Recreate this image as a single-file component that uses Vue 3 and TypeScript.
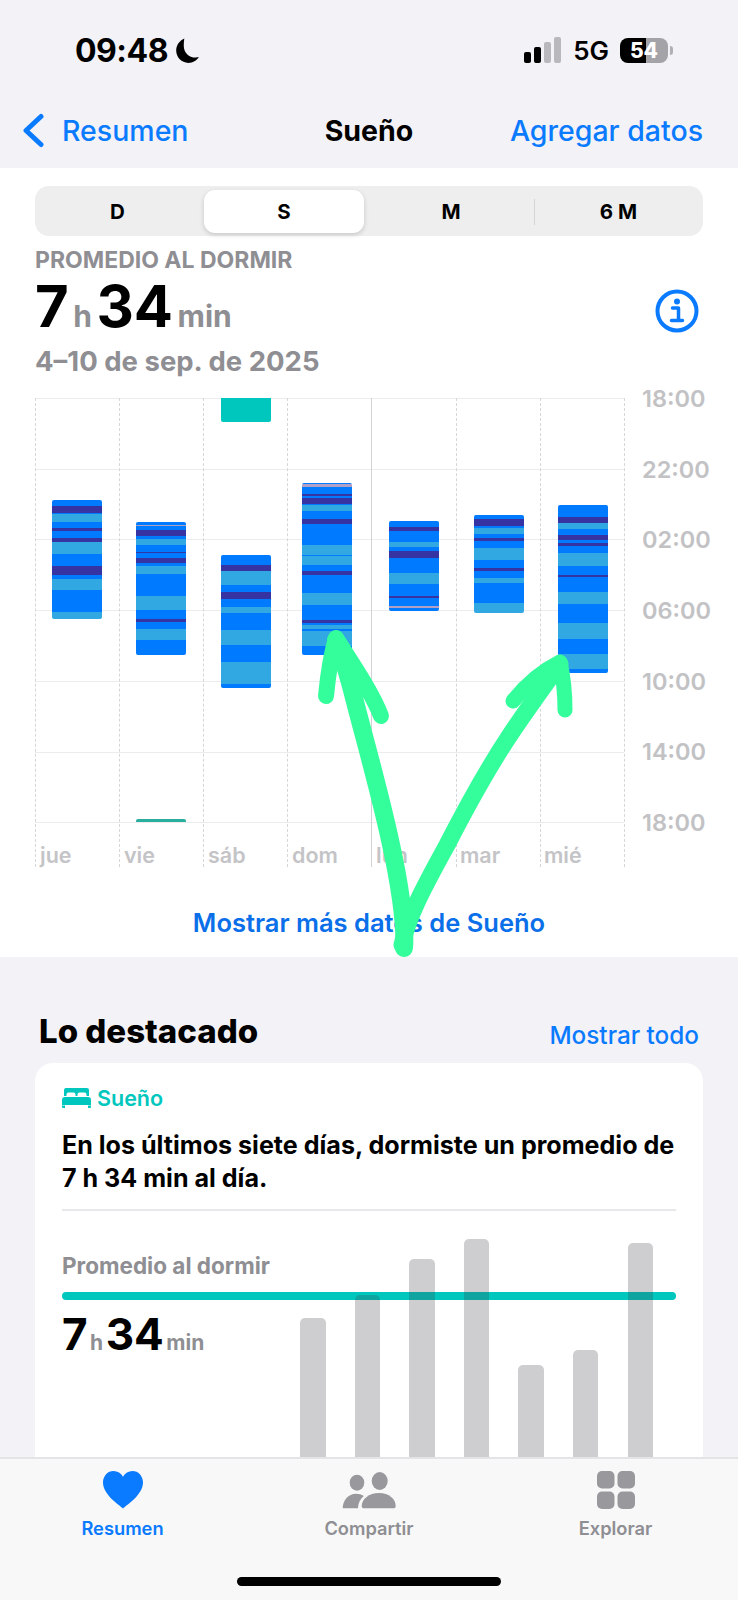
<script setup lang="ts">
type Stage = 'c' | 'r' | 'd' | 'a'
// [zoomed end position, stage]; divided by 3 when drawn
type Bar = { x: number; top: number; stops: [number, Stage][] }

const origin = 25
const bars: Bar[] = [
  { x: 17, top: 331, stops: [[348, 'c'], [370, 'd'], [374, 'c'], [396, 'r'], [415, 'c'], [423, 'd'], [445, 'c'], [456, 'd'], [492, 'r'], [530, 'c'], [557, 'd'], [567, 'c'], [600, 'r'], [668, 'c'], [688, 'r']] },
  { x: 101, top: 396, stops: [[405, 'c'], [410, 'a'], [422, 'c'], [440, 'd'], [447, 'c'], [467, 'r'], [488, 'c'], [491, 'd'], [506, 'c'], [521, 'd'], [529, 'c'], [554, 'r'], [618, 'c'], [662, 'r'], [689, 'c'], [697, 'd'], [719, 'c'], [752, 'r'], [783, 'c'], [785, 'r'], [795, 'c']] },
  { x: 186, top: 495, stops: [[525, 'c'], [545, 'd'], [585, 'r'], [606, 'c'], [628, 'd'], [651, 'c'], [670, 'r'], [720, 'c'], [765, 'r'], [817, 'c'], [884, 'r'], [895, 'c']] },
  { x: 267, top: 280, stops: [[284, 'c'], [291, 'a'], [314, 'c'], [318, 'd'], [325, 'c'], [342, 'd'], [345, 'c'], [365, 'r'], [387, 'c'], [402, 'd'], [465, 'c'], [495, 'r'], [500, 'c'], [525, 'r'], [545, 'c'], [557, 'd'], [609, 'c'], [647, 'r'], [691, 'c'], [699, 'd'], [707, 'c'], [719, 'r'], [724, 'c'], [770, 'r'], [795, 'c']] },
  { x: 354, top: 393, stops: [[413, 'c'], [425, 'd'], [456, 'c'], [471, 'r'], [485, 'c'], [504, 'd'], [549, 'c'], [583, 'r'], [620, 'c'], [626, 'd'], [648, 'c'], [654, 'a'], [664, 'c']] },
  { x: 439, top: 375, stops: [[389, 'c'], [408, 'd'], [416, 'c'], [434, 'r'], [446, 'c'], [454, 'd'], [476, 'c'], [510, 'r'], [534, 'c'], [545, 'd'], [565, 'c'], [579, 'r'], [641, 'c'], [670, 'r']] },
  { x: 523, top: 347, stops: [[383, 'c'], [400, 'd'], [417, 'r'], [435, 'c'], [450, 'd'], [460, 'c'], [469, 'd'], [490, 'c'], [529, 'r'], [556, 'c'], [561, 'd'], [607, 'c'], [642, 'r'], [700, 'c'], [747, 'r'], [794, 'c'], [837, 'r'], [850, 'c']] }
]

const stageClass: Record<Stage, string> = { c: 'core', r: 'rem', d: 'deep', a: 'awake' }

function segments(bar: Bar): { h: number; cls: string }[] {
  let prev = bar.top
  return bar.stops.map(([end, s]) => {
    const h = (end - prev) / 3
    prev = end
    return { h, cls: stageClass[s] }
  })
}

function barStyle(bar: Bar) {
  return { left: bar.x + 'px', top: (bar.top - origin) / 3 + 'px' }
}

const dayLines = [0, 83.5, 168, 252, 336, 420.5, 505, 589]
const hourLines = [0, 71, 141, 212, 283, 354, 424]
const hours = ['18:00', '22:00', '02:00', '06:00', '10:00', '14:00', '18:00']
const days = ['jue', 'vie', 'sáb', 'dom', 'lun', 'mar', 'mié']
const weekBars = [1318, 1295, 1259, 1239, 1365, 1350, 1243]
</script>

<template>
  <div class="screen">
    <header class="top">
      <div class="status">
        <div class="clock">
          <span>09:48</span>
          <svg width="26" height="27" viewBox="0 0 24 25"><path d="M9.500 1.500C5 3.500 2 7.800 2 12.600 2 19 7 24 13.300 24c4 0 7.600-2 9.700-5.400-1 .3-2 .4-3 .4C13.700 19 9 14.200 9 8c0-2.300.2-4.500.5-6.500z" fill="#000" /></svg>
        </div>
        <div class="indicators">
          <svg width="38" height="26" viewBox="0 0 38 26">
            <rect x="0" y="15" width="7" height="11" rx="2" fill="#000" />
            <rect x="10" y="10" width="7" height="16" rx="2" fill="#000" />
            <rect x="20" y="5" width="7" height="21" rx="2" fill="#b9b9bd" />
            <rect x="30" y="0" width="7" height="26" rx="2" fill="#b9b9bd" />
          </svg>
          <span class="net">5G</span>
          <div class="battery">
            <span class="level">54</span>
            <i class="cap"></i>
          </div>
        </div>
      </div>
      <nav class="navbar">
        <a class="back">
          <svg width="23" height="35" viewBox="0 0 23 35"><path d="M19 3.500 4 17.500l15 14" fill="none" stroke="#0a7aff" stroke-width="5" stroke-linecap="round" stroke-linejoin="round" /></svg>
          <span>Resumen</span>
        </a>
        <b class="title">Sueño</b>
        <a class="add">Agregar datos</a>
      </nav>
    </header>

    <section class="summary">
      <div class="segmented">
        <span class="seg">D</span>
        <span class="seg active">S</span>
        <span class="seg">M</span>
        <span class="seg last">6 M</span>
      </div>
      <div class="caption">PROMEDIO AL DORMIR</div>
      <div class="value-row">
        <div class="value">7<small>h</small>34<small>min</small></div>
        <svg class="info" width="44" height="44" viewBox="0 0 44 44">
          <circle cx="22" cy="22" r="19.500" fill="none" stroke="#0a7aff" stroke-width="4" />
          <circle cx="22" cy="12.500" r="3" fill="#0a7aff" />
          <path d="M17.500 19h6v12M16.500 31.500h11" fill="none" stroke="#0a7aff" stroke-width="3.500" stroke-linecap="round" stroke-linejoin="round" />
        </svg>
      </div>
      <div class="range">4–10 de sep. de 2025</div>

      <div class="chart">
        <div class="plot">
          <i v-for="y in hourLines" :key="y" class="h-line" :style="{ top: y + 'px' }"></i>
          <i v-for="(x, i) in dayLines" :key="x" class="v-line" :class="{ monday: i === 4 }" :style="{ left: x + 'px' }"></i>
          <div class="nap" style="left: 186px; top: 0; height: 24px"></div>
          <div class="nap thin" style="left: 101px; top: 421px; height: 3px"></div>
          <div v-for="(bar, b) in bars" :key="b" class="bar" :style="barStyle(bar)">
            <i v-for="(s, j) in segments(bar)" :key="j" :class="s.cls" :style="{ height: s.h + 'px' }"></i>
          </div>
          <div class="days">
            <span v-for="d in days" :key="d">{{ d }}</span>
          </div>
        </div>
        <div class="hours">
          <span v-for="(h, i) in hours" :key="i">{{ h }}</span>
        </div>
      </div>

      <a class="more">Mostrar más datos de Sueño</a>
    </section>

    <section class="highlights">
      <div class="hl-head">
        <h2>Lo destacado</h2>
        <a>Mostrar todo</a>
      </div>
      <article class="card">
        <div class="card-tag">
          <svg width="29" height="20" viewBox="0 0 29 20">
            <path d="M4 0h21a2 2 0 0 1 2 2v6h-2.500V6.500a2 2 0 0 0-2-2h-5a2 2 0 0 0-2 2V8h-2V6.500a2 2 0 0 0-2-2h-5a2 2 0 0 0-2 2V8H2V2a2 2 0 0 1 2-2z" fill="#00c7be" />
            <path d="M3 9h23a3 3 0 0 1 3 3v5H0v-5a3 3 0 0 1 3-3zM0 17.500h3V20H1a1 1 0 0 1-1-1zM26 17.500h3V19a1 1 0 0 1-1 1h-2z" fill="#00c7be" />
          </svg>
          <span>Sueño</span>
        </div>
        <p class="card-text">En los últimos siete días, dormiste un promedio de<br />7 h 34 min al día.</p>
        <div class="card-chart">
          <div class="card-label">Promedio al dormir</div>
          <i class="avg-line"></i>
          <div class="card-value">7<small>h</small>34<small>min</small></div>
          <div class="week">
            <i v-for="(t, i) in weekBars" :key="i" :style="{ height: 1457 - t + 'px' }"></i>
          </div>
        </div>
      </article>
    </section>

    <footer class="tabbar">
      <div class="tabs">
        <a class="tab on">
          <svg width="40" height="38" viewBox="0 0 40 38"><path d="M20 37.500C16.500 34 0 24 0 11.500 0 4.800 4.800 0 10.500 0 14.500 0 18 2.200 20 5.800 22 2.200 25.500 0 29.500 0 35.200 0 40 4.800 40 11.500 40 24 23.500 34 20 37.500z" fill="#0a7aff" /></svg>
          <span>Resumen</span>
        </a>
        <a class="tab">
          <svg width="54" height="37" viewBox="0 0 54 37" fill="#98989d">
            <ellipse cx="15" cy="10.700" rx="7.300" ry="8" />
            <ellipse cx="37.700" cy="9" rx="8" ry="9" />
            <path d="M.7 36.300c0-8 5.700-14.600 13.300-14.600 3 0 5.500.8 7.800 2.300-3.500 3-5.800 7.200-5.800 12.300z" />
            <path d="M22 36.300c-1.500 0-2.300-.8-2.300-2.300 0-7 7.300-13 17.300-13s16.700 6 16.700 13c0 1.500-.8 2.300-2.300 2.300z" />
          </svg>
          <span>Compartir</span>
        </a>
        <a class="tab">
          <svg width="38" height="38" viewBox="0 0 38 38" fill="#98989d">
            <rect x="0" y="0" width="17.500" height="17.500" rx="5" />
            <rect x="20.500" y="0" width="17.500" height="17.500" rx="5" />
            <rect x="0" y="20.500" width="17.500" height="17.500" rx="5" />
            <rect x="20.500" y="20.500" width="17.500" height="17.500" rx="5" />
          </svg>
          <span>Explorar</span>
        </a>
      </div>
      <i class="home"></i>
    </footer>

    <!-- hand drawn markup on top of the screenshot -->
    <svg class="scribble" width="738" height="1600" viewBox="0 0 738 1600" fill="none" stroke="#34fd9b" stroke-linecap="round" stroke-linejoin="round">
      <path stroke-width="18" d="M404 948C406 925 399 880 390 840 378 785 362 730 352 690 346 668 341 650 336 640" />
      <path stroke-width="16" d="M326 696C328 675 331 655 336 638 350 660 372 692 381 716" />
      <path stroke-width="17" d="M402 945C408 915 428 880 447 845 465 810 490 765 510 735 528 708 545 685 560 664" />
      <path stroke-width="15" d="M513 701C525 686 540 672 560 662 564 680 565 695 565 710" />
    </svg>
  </div>
</template>

<style>
html,
body {
  margin: 0;
  background: #f2f2f7;
}
</style>

<style scoped>
.screen {
  position: relative;
  width: 738px;
  height: 1600px;
  overflow: hidden;
  background: #f2f2f7;
  font-family: Inter, "Liberation Sans", sans-serif;
  color: #000;
}
i {
  display: block;
}
.top {
  height: 168px;
  display: flex;
  flex-direction: column;
}
.status {
  height: 100px;
  display: flex;
  justify-content: space-between;
  align-items: center;
  padding: 0 70px 0 75px;
}
.clock {
  display: flex;
  align-items: center;
  gap: 6px;
  font-size: 32px;
  font-weight: 700;
  letter-spacing: -0.5px;
}
.indicators {
  display: flex;
  align-items: center;
  gap: 11px;
}
.net {
  font-size: 26px;
  font-weight: 600;
}
.battery {
  position: relative;
  width: 48px;
  height: 25px;
  border-radius: 8px;
  background: linear-gradient(90deg, #000 54%, #a3a3a8 54%);
  display: flex;
  justify-content: center;
  align-items: center;
}
.level {
  font-size: 21px;
  font-weight: 800;
  color: #fff;
}
.cap {
  position: absolute;
  right: -5px;
  top: 8px;
  width: 3px;
  height: 9px;
  border-radius: 0 3px 3px 0;
  background: #b0b0b4;
}
.navbar {
  flex: 1;
  display: grid;
  grid-template-columns: 1fr auto 1fr;
  align-items: center;
  padding: 0 35px 8px;
  font-size: 28.500px;
  font-weight: 500;
  color: #0a7aff;
}
.back {
  display: flex;
  align-items: center;
  gap: 17px;
  margin-left: -13px;
}
.add {
  justify-self: end;
  white-space: nowrap;
}
.title {
  color: #000;
  font-weight: 700;
}
.summary {
  height: 789px;
  background: #fff;
  padding: 18px 35px 0;
  box-sizing: border-box;
}
.segmented {
  height: 50px;
  border-radius: 14px;
  background: #eeeeef;
  display: grid;
  grid-template-columns: 165px 168px 166px 169px;
  align-items: center;
  font-size: 20.500px;
  font-weight: 700;
}
.seg {
  height: 43px;
  display: flex;
  align-items: center;
  justify-content: center;
}
.seg.active {
  background: #fff;
  border-radius: 11px;
  width: 160px;
  justify-self: center;
  box-shadow: 0 2px 5px rgba(0, 0, 0, 0.16);
}
.seg.last {
  position: relative;
}
.seg.last::before {
  content: "";
  position: absolute;
  left: 0;
  top: 9px;
  width: 1px;
  height: 26px;
  background: #d5d5d8;
}
.caption {
  margin-top: 12px;
  font-size: 23px;
  line-height: 24px;
  font-weight: 700;
  color: #8e8e93;
}
.value-row {
  margin-top: 8px;
  height: 62px;
  display: flex;
  justify-content: space-between;
  align-items: center;
  padding-right: 4px;
}
.value {
  font-size: 58px;
  font-weight: 700;
  line-height: 62px;
}
.value small {
  font-size: 30px;
  font-weight: 700;
  color: #8e8e93;
  margin: 0 4.500px;
}
.value small:last-child {
  margin-right: 0;
}
.range {
  margin-top: 4px;
  font-size: 27.500px;
  line-height: 30px;
  font-weight: 700;
  color: #8e8e93;
}
.chart {
  margin-top: 22px;
  display: flex;
}
.plot {
  position: relative;
  flex: none;
  width: 589px;
  height: 469px;
}
.h-line {
  position: absolute;
  left: 0;
  right: 0;
  height: 1px;
  background: #ececee;
}
.v-line {
  position: absolute;
  top: 0;
  bottom: 0;
  width: 0;
  border-left: 1px dashed #d6d6d9;
}
.v-line.monday {
  border-left: 1px solid #d3d3d6;
}
.nap {
  position: absolute;
  width: 50px;
  background: #00c7be;
  border-radius: 0 0 2px 2px;
}
.nap.thin {
  background: #2aae9e;
  border-radius: 2px 2px 0 0;
}
.bar {
  position: absolute;
  width: 50px;
  border-radius: 2px;
  overflow: hidden;
}
.core {
  background: #007aff;
}
.rem {
  background: #32a8e2;
}
.deep {
  background: #3634a3;
}
.awake {
  background: #b0a0c8;
}
.days {
  position: absolute;
  left: 0;
  right: 0;
  top: 445px;
  display: grid;
  grid-template-columns: repeat(7, 84px);
  font-size: 21.500px;
  line-height: 24px;
  font-weight: 600;
  color: #c4c4c7;
}
.days span {
  padding-left: 5px;
}
.hours {
  flex: none;
  width: 64px;
  height: 424px;
  margin-left: 18px;
  padding-top: 1px;
  display: flex;
  flex-direction: column;
  justify-content: space-between;
  font-size: 23.500px;
  line-height: 0;
  font-weight: 600;
  color: #c2c2c5;
}
.hours span {
  display: block;
}
.more {
  display: block;
  margin-top: 41px;
  text-align: center;
  font-size: 25.500px;
  line-height: 30px;
  font-weight: 600;
  color: #0a6fe8;
}
.highlights {
  padding: 0 35px;
}
.hl-head {
  height: 106px;
  display: flex;
  justify-content: space-between;
  align-items: flex-end;
  padding: 0 4px 13px 4px;
  box-sizing: border-box;
}
.hl-head h2 {
  margin: 0;
  font-size: 33px;
  line-height: 38px;
  font-weight: 800;
}
.hl-head a {
  font-size: 24.300px;
  line-height: 30px;
  font-weight: 500;
  color: #0a7aff;
}
.card {
  background: #fff;
  border-radius: 18px;
  height: 420px;
  padding: 22px 27px 0;
  box-sizing: border-box;
}
.card-tag {
  display: flex;
  align-items: center;
  gap: 6px;
  font-size: 21.500px;
  font-weight: 600;
  color: #00c7be;
}
.card-text {
  margin: 18px 0 0;
  padding-bottom: 14px;
  border-bottom: 2px solid #e8e8ea;
  font-size: 25.100px;
  line-height: 33px;
  font-weight: 700;
  white-space: nowrap;
}
.card-chart {
  position: relative;
  height: 247px;
}
.card-label {
  padding-top: 42px;
  font-size: 22.500px;
  line-height: 26px;
  font-weight: 700;
  color: #8e8e93;
}
.avg-line {
  height: 8px;
  margin-top: 13px;
  border-radius: 4px;
  background: #00c7be;
}
.card-value {
  margin-top: 10px;
  font-size: 44px;
  line-height: 48px;
  font-weight: 700;
}
.card-value small {
  font-size: 21px;
  font-weight: 700;
  color: #8e8e93;
  margin: 0 2.500px;
}
.week {
  position: absolute;
  left: 238px;
  bottom: 1px;
  display: flex;
  align-items: flex-end;
  gap: 29.100px;
}
.week i {
  width: 25.500px;
  border-radius: 5px 5px 0 0;
  background: rgba(60, 60, 67, 0.25);
}
.tabbar {
  position: absolute;
  left: 0;
  right: 0;
  bottom: 0;
  height: 143px;
  box-sizing: border-box;
  border-top: 2px solid #e4e4e6;
  background: #f8f8f8;
}
.tabs {
  display: grid;
  grid-template-columns: 245px 248px 245px;
  padding-top: 10px;
}
.tab {
  display: flex;
  flex-direction: column;
  align-items: center;
  justify-content: flex-end;
  height: 70px;
  gap: 8px;
  font-size: 18.300px;
  line-height: 22px;
  font-weight: 600;
  color: #8e8e93;
}
.tab.on {
  color: #0a7aff;
}
.home {
  width: 264px;
  height: 9px;
  margin: 38px auto 0;
  border-radius: 5px;
  background: #000;
}
.scribble {
  position: absolute;
  left: 0;
  top: 0;
  pointer-events: none;
}
</style>
